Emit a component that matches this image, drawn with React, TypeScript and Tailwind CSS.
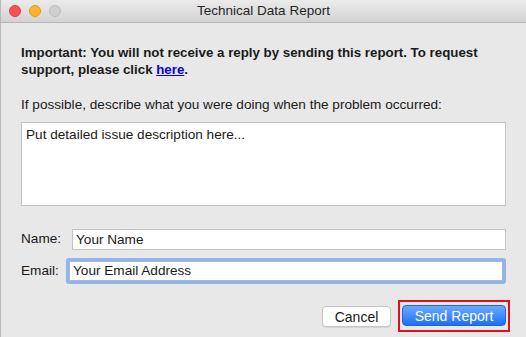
import { useState } from 'react'

const font = { fontFamily: '"Liberation Sans", Arial, sans-serif' }

function TrafficLights() {
  return (
    <div className="flex items-center gap-[8px] pl-[8px]">
      <span className="w-[12px] h-[12px] rounded-full bg-[#fc4f52] border border-[#df3d3f]" />
      <span className="w-[12px] h-[12px] rounded-full bg-[#fdb42b] border border-[#de9c1f]" />
      <span className="w-[12px] h-[12px] rounded-full bg-[#cfcfcf] border border-[#bcbcbc]" />
    </div>
  )
}

export default function App() {
  const [desc, setDesc] = useState('Put detailed issue description here...')
  const [name, setName] = useState('Your Name')
  const [email, setEmail] = useState('Your Email Address')

  return (
    <div className="w-[526px] h-[337px] bg-[#e8e8e8] flex flex-col text-[#1a1a1a] border-l border-[#b9b9b9]" style={font}>
      {/* 标题栏 */}
      <div className="relative h-[23px] shrink-0 flex items-center bg-gradient-to-b from-[#ebebeb] to-[#d3d3d3] border-b border-[#b4b4b4]">
        <TrafficLights />
        <div className="absolute inset-0 flex items-center justify-center text-[13.5px] text-[#262626]">
          Technical Data Report
        </div>
      </div>

      <div className="flex-1 flex flex-col pl-[20px] pr-[20px]">
        <p className="mt-[21px] text-[13.3px] font-bold leading-[17px]">
          <span>Important: You will not receive a reply by sending this report. To request</span>
          <br />
          <span>support, please click </span>
          <a href="#" className="text-[#0b00e8] underline">here</a>
          <span>.</span>
        </p>

        <p className="mt-[18px] text-[13.6px] leading-[17px]">
          If possible, describe what you were doing when the problem occurred:
        </p>

        <textarea
          value={desc}
          onChange={e => setDesc(e.target.value)}
          className="mt-[9px] h-[84px] w-[485px] bg-white border border-[#c3c3c3] px-[4px] py-[3px] text-[13.6px] leading-[17px] resize-none outline-none"
          style={font}
        />

        <div className="mt-[23px] flex items-center">
          <span className="w-[51px] text-[13.6px]">Name:</span>
          <input
            value={name}
            onChange={e => setName(e.target.value)}
            className="w-[434px] h-[21px] bg-white border border-[#c3c3c3] px-[3px] text-[13.6px] outline-none"
            style={font}
          />
        </div>

        <div className="mt-[8px] flex items-center">
          <span className="w-[48px] text-[13.6px]">Email:</span>
          <div className="rounded-[3px] border-[3px] border-[#8db5f2]">
            <input
              value={email}
              onChange={e => setEmail(e.target.value)}
              className="block w-[434px] h-[20px] bg-white border border-[#b5b5b5] px-[3px] text-[13.6px] outline-none"
              style={font}
            />
          </div>
        </div>

        <div className="mt-[16px] flex items-center justify-end gap-[7px] mr-[-4px]">
          <button className="w-[69px] h-[21px] bg-white border border-[#c5c5c5] rounded-[4px] text-[14px] shadow-[0_1px_0_rgba(0,0,0,0.08)]">
            Cancel
          </button>
          <div className="border-2 border-[#e0111e] p-[2px]">
            <button className="w-[104px] h-[21px] rounded-[4px] text-[14px] text-white bg-gradient-to-b from-[#6aa9fd] to-[#1870f6] border border-[#1d66de]">
              Send Report
            </button>
          </div>
        </div>
      </div>
    </div>
  )
}
